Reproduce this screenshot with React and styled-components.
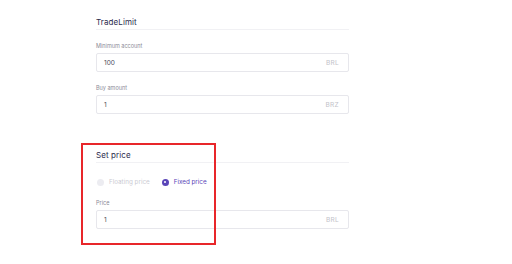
import React from 'react';
import styled, { createGlobalStyle } from 'styled-components';

const GlobalStyle = createGlobalStyle`
  body {
    margin: 0;
    background: #ffffff;
    font-family: 'Inter', 'Lato', sans-serif;
  }
`;

const Page = styled.div`
  position: relative;
  width: 512px;
  height: 264px;
  padding: 16px 0 0 96px;
  box-sizing: border-box;
`;

const Form = styled.div`
  width: 253px;
  display: flex;
  flex-direction: column;
`;

const Section = styled.div`
  display: flex;
  flex-direction: column;
  margin-top: ${(p) => p.offset || 0}px;
`;

const Heading = styled.div`
  height: 13px;
  line-height: 13px;
  font-size: 8px;
  font-weight: 400;
  letter-spacing: 0.1px;
  color: #2c2b4d;
  border-bottom: 1px solid #f1f1f4;
`;

const Label = styled.div`
  margin-top: ${(p) => p.gap || 12}px;
  height: 8px;
  line-height: 8px;
  font-size: 5.5px;
  color: #8a8a96;
`;

const Field = styled.div`
  margin-top: 3px;
  height: 19px;
  box-sizing: border-box;
  border: 1px solid #e7e7ec;
  border-radius: 2px;
  display: flex;
  align-items: center;
  justify-content: space-between;
  padding: 0 9px 0 7px;
  font-size: 6.5px;
`;

const Value = styled.span`
  color: #4a4a55;
`;

const Unit = styled.span`
  color: #c2c2c9;
  letter-spacing: 0.3px;
`;

const RadioRow = styled.div`
  margin-top: 14px;
  height: 10px;
  display: flex;
  align-items: center;
  gap: 12px;
  padding-left: 1px;
`;

const Option = styled.label`
  display: flex;
  align-items: center;
  gap: 5px;
  font-size: 6.3px;
  color: ${(p) => (p.checked ? '#5a45b8' : '#cbcbd3')};
`;

const Dot = styled.span`
  width: 7px;
  height: 7px;
  border-radius: 50%;
  box-sizing: border-box;
  background: ${(p) => (p.checked ? '#5a45b8' : '#ececf1')};
  display: flex;
  align-items: center;
  justify-content: center;

  &::after {
    content: '';
    width: 2px;
    height: 2px;
    border-radius: 50%;
    background: ${(p) => (p.checked ? '#ffffff' : 'transparent')};
  }
`;

const Highlight = styled.div`
  position: absolute;
  left: 81px;
  top: 143px;
  width: 135px;
  height: 102px;
  box-sizing: border-box;
  border: 2px solid #e8262a;
  pointer-events: none;
`;

const InputField = ({ value, unit }) => (
  <Field>
    <Value>{value}</Value>
    <Unit>{unit}</Unit>
  </Field>
);

const App = () => (
  <Page>
    <GlobalStyle />
    <Form>
      <Section>
        <Heading>TradeLimit</Heading>
        <Label>Minimum account</Label>
        <InputField value="100" unit="BRL" />
        <Label>Buy amount</Label>
        <InputField value="1" unit="BRZ" />
      </Section>
      <Section offset={35}>
        <Heading>Set price</Heading>
        <RadioRow>
          <Option>
            <Dot />
            Floating price
          </Option>
          <Option checked>
            <Dot checked />
            Fixed price
          </Option>
        </RadioRow>
        <Label>Price</Label>
        <InputField value="1" unit="BRL" />
      </Section>
    </Form>
    <Highlight />
  </Page>
);

export default App;
